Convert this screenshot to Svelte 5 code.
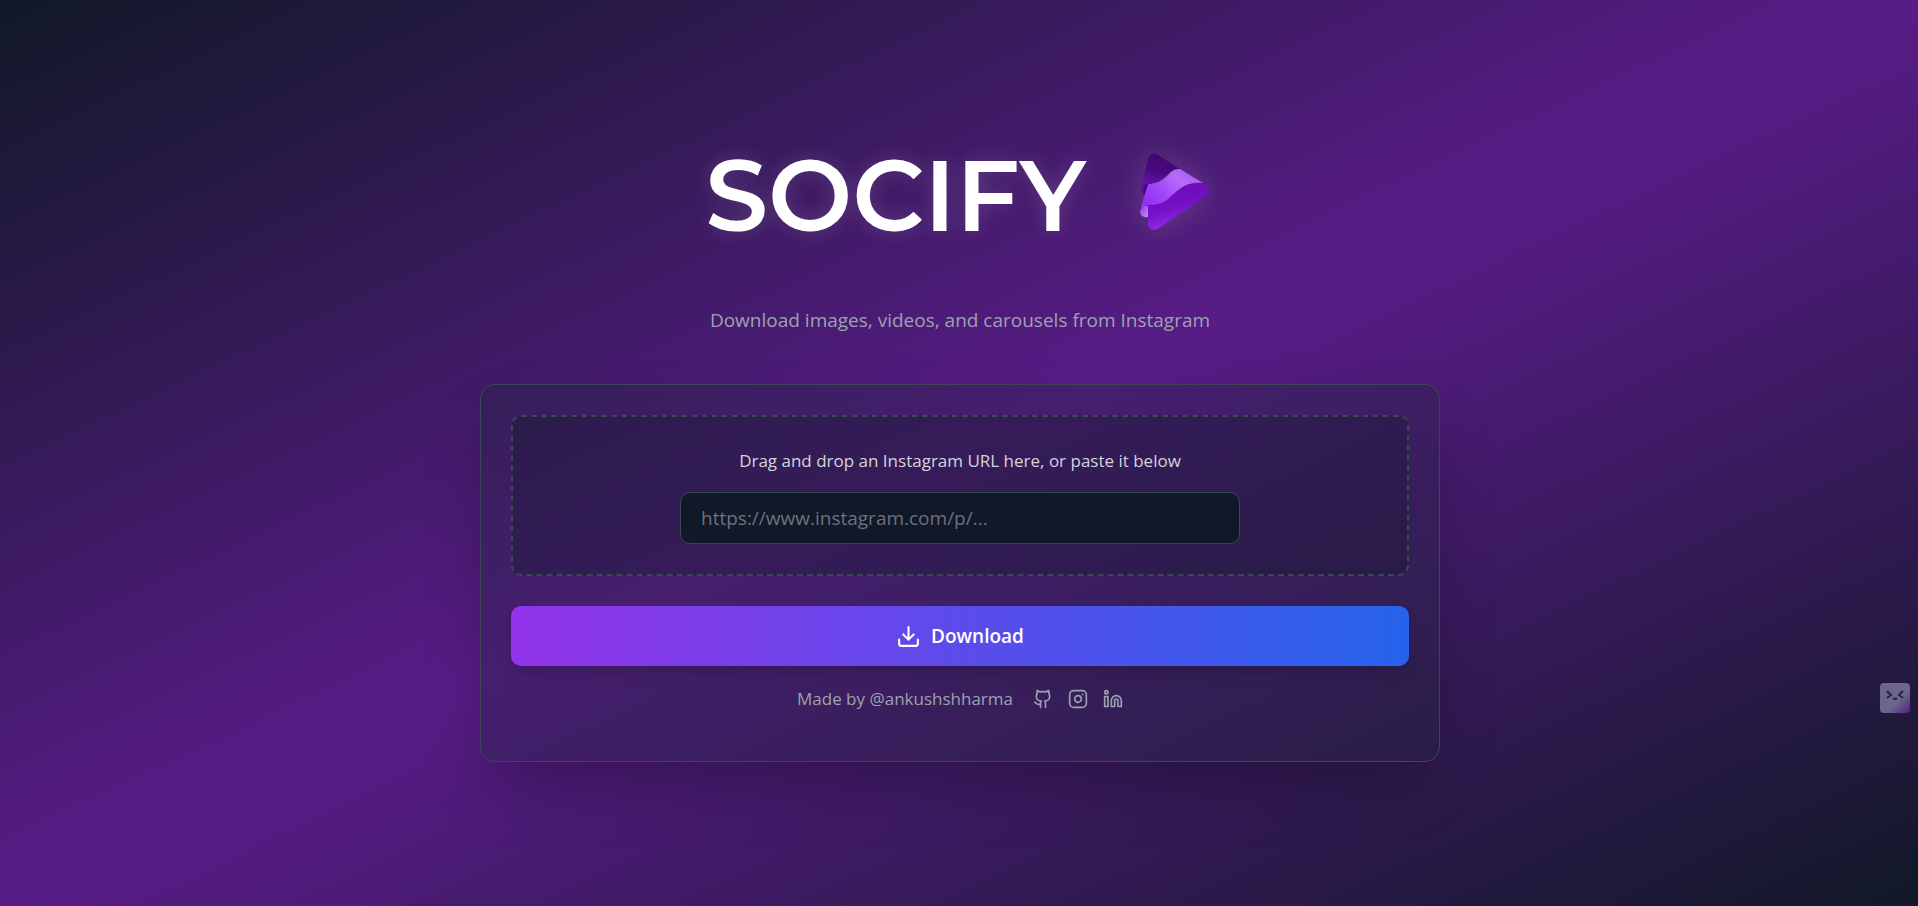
<script>
  let url = $state('');

  function drop(event) {
    event.preventDefault();
    url = event.dataTransfer.getData('text');
  }
</script>

<main>
  <header>
    <div class="brand">
      <h1>SOCIFY</h1>
      <svg class="logo" viewBox="9 16 96 96" aria-hidden="true">
        <defs>
          <linearGradient id="dark" x1="0.6" y1="0" x2="0.4" y2="1">
            <stop offset="0" stop-color="#40086f" />
            <stop offset="0.5" stop-color="#480980" />
            <stop offset="1" stop-color="#6513ae" />
          </linearGradient>
          <linearGradient id="fold" x1="0" y1="0" x2="1" y2="0">
            <stop offset="0" stop-color="#6a14b4" />
            <stop offset="0.5" stop-color="#310461" />
          </linearGradient>
          <linearGradient id="light" x1="0" y1="0.7" x2="1" y2="0.2">
            <stop offset="0" stop-color="#9130f4" />
            <stop offset="0.35" stop-color="#a24bfa" />
            <stop offset="0.65" stop-color="#b56cf6" />
            <stop offset="1" stop-color="#a85aec" />
          </linearGradient>
          <linearGradient id="curl" x1="0" y1="0" x2="1" y2="1">
            <stop offset="0" stop-color="#8929df" />
            <stop offset="1" stop-color="#c891fa" />
          </linearGradient>
          <linearGradient id="front" x1="0.35" y1="0.2" x2="0.6" y2="0.85">
            <stop offset="0" stop-color="#6d0dba" />
            <stop offset="0.5" stop-color="#7411c4" />
            <stop offset="1" stop-color="#9029e6" />
          </linearGradient>
        </defs>
        <path fill="url(#fold)" d="M31 54 C30 60 32 64 36 64 L43 50 Z" />
        <path fill="url(#dark)" d="M38 28 C39 23 44 21 48 24 L70 38 C61 38 59 43 54 47 C47 54 38 50 31 57 Z" />
        <path fill="url(#light)" d="M38 53 C45 53 50 51 56 46 C61 41 63 38 70 38 L93 52 L88 58 L52 77 L31 76 Z" />
        <path fill="url(#curl)" d="M31 77 C28 83 32 87 38 86 L38 74 C35 73 32 74 31 77 Z" />
        <path fill="url(#front)" d="M33 74 C43 74 51 74 58 68 C67 60 75 50 92 52 C99 54 101 61 96 65 L49 97 C44 101 38 98 38 93 L38 75 Z" />
      </svg>
    </div>
    <p class="tagline">Download images, videos, and carousels from Instagram</p>
  </header>

  <section class="card">
    <div class="dropzone" role="group" ondragover={(event) => event.preventDefault()} ondrop={drop}>
      <label for="url">Drag and drop an Instagram URL here, or paste it below</label>
      <input id="url" type="text" placeholder="https://www.instagram.com/p/..." bind:value={url} />
    </div>

    <button class="download" type="button">
      <svg class="icon" viewBox="0 0 24 24" aria-hidden="true">
        <path d="M21 15v4a2 2 0 0 1-2 2H5a2 2 0 0 1-2-2v-4" />
        <path d="m7 10 5 5 5-5M12 15V3" />
      </svg>
      <span>Download</span>
    </button>

    <footer>
      <span>Made by @ankushshharma</span>
      <nav>
        <a href="#github" aria-label="GitHub">
          <svg class="icon" viewBox="0 0 24 24">
            <path d="M15 22v-4a4.800 4.800 0 0 0-1-3.500c3 0 6-2 6-5.500.080-1.250-.270-2.480-1-3.500.280-1.150.280-2.350 0-3.500 0 0-1 0-3 1.500-2.640-.500-5.360-.500-8 0C6 2 5 2 5 2c-.300 1.150-.300 2.350 0 3.500A5.403 5.403 0 0 0 4 9c0 3.500 3 5.500 6 5.500-.390.490-.680 1.050-.850 1.650-.170.600-.220 1.230-.150 1.850v4" />
            <path d="M9 18c-4.510 2-5-2-7-2" />
          </svg>
        </a>
        <a href="#instagram" aria-label="Instagram">
          <svg class="icon" viewBox="0 0 24 24">
            <rect width="20" height="20" x="2" y="2" rx="5" />
            <path d="M16 11.370A4 4 0 1 1 12.630 8 4 4 0 0 1 16 11.370zM17.500 6.500h.010" />
          </svg>
        </a>
        <a href="#linkedin" aria-label="LinkedIn">
          <svg class="icon" viewBox="0 0 24 24">
            <path d="M16 8a6 6 0 0 1 6 6v7h-4v-7a2 2 0 0 0-4 0v7h-4v-7a6 6 0 0 1 6-6z" />
            <rect width="4" height="12" x="2" y="9" />
            <circle cx="4" cy="4" r="2" />
          </svg>
        </a>
      </nav>
    </footer>
  </section>

  <button class="helper" type="button" aria-label="Assistant">
    <svg viewBox="0 0 30 30" aria-hidden="true">
      <path d="m7 8 4 4-4 3M23 8l-4 4 4 3M13 15q2 2 4 0" />
    </svg>
  </button>
</main>

<style>
  :global(body) {
    margin: 0;
    background: #111827;
  }

  main {
    box-sizing: border-box;
    min-height: 100vh;
    padding: 135px 19px 120px 21px;
    display: flex;
    flex-direction: column;
    align-items: center;
    background: linear-gradient(to bottom right, #111827, #581c87, #111827);
    color: #fff;
    font-family: "Segoe UI", "Open Sans", "Noto Sans", sans-serif;
  }

  header {
    display: flex;
    flex-direction: column;
    align-items: center;
    gap: 50px;
  }

  .brand {
    display: flex;
    align-items: center;
    gap: 33px;
  }

  h1 {
    margin: 0;
    font: 600 100px/120px Montserrat, Lato, sans-serif;
    text-shadow: 0 0 20px rgba(255, 255, 255, 0.15);
  }

  .logo {
    width: 96px;
    height: 96px;
    filter: drop-shadow(0 0 15px rgba(255, 255, 255, 0.15));
  }

  .tagline {
    margin: 0;
    font-size: 19px;
    line-height: 30px;
    color: #9ca3af;
  }

  .card {
    box-sizing: border-box;
    width: 100%;
    max-width: 960px;
    margin-top: 49px;
    padding: 30px 30px 48px;
    border: 1px solid #394852;
    border-radius: 15px;
    background: rgba(31, 41, 55, 0.3);
    box-shadow: 0 31px 62px -15px rgba(0, 0, 0, 0.3);
  }

  .dropzone {
    display: flex;
    flex-direction: column;
    align-items: center;
    gap: 17px;
    padding: 30px;
    border: 2px dashed #394852;
    border-radius: 10px;
    background: rgba(17, 24, 39, 0.3);
  }

  label {
    font-size: 17px;
    line-height: 28px;
    color: #d1d5db;
  }

  input {
    box-sizing: border-box;
    width: 100%;
    max-width: 560px;
    height: 52px;
    padding: 0 20px;
    border: 1px solid #394852;
    border-radius: 10px;
    background: #111827;
    color: #fff;
    font: inherit;
    font-size: 19px;
  }

  input::placeholder {
    color: #6b7280;
    opacity: 1;
  }

  .icon {
    display: block;
    width: 20px;
    height: 20px;
    fill: none;
    stroke: currentColor;
    stroke-width: 2;
    stroke-linecap: round;
    stroke-linejoin: round;
  }

  .download {
    display: flex;
    align-items: center;
    justify-content: center;
    gap: 10px;
    width: 100%;
    height: 60px;
    margin-top: 30px;
    padding: 0;
    border: 0;
    border-radius: 10px;
    background: linear-gradient(to right, #9333ea, #2563eb);
    box-shadow: 0 12px 18px -4px rgba(0, 0, 0, 0.1), 0 5px 8px -4px rgba(0, 0, 0, 0.1);
    color: #fff;
    font: inherit;
    font-size: 19px;
    font-weight: 600;
  }

  .download .icon {
    width: 25px;
    height: 25px;
  }

  footer {
    display: flex;
    align-items: center;
    justify-content: center;
    gap: 20px;
    margin-top: 19px;
    font-size: 17px;
    line-height: 28px;
    color: #9ca3af;
  }

  nav {
    display: flex;
    gap: 15px;
  }

  a {
    color: inherit;
  }

  .helper {
    position: fixed;
    top: 683px;
    right: 8px;
    width: 30px;
    height: 30px;
    padding: 0;
    border: 0;
    border-radius: 4px;
    background: linear-gradient(135deg, #6b668c 60%, #512080);
  }

  .helper svg {
    display: block;
    fill: none;
    stroke: #282044;
    stroke-width: 2;
  }
</style>
